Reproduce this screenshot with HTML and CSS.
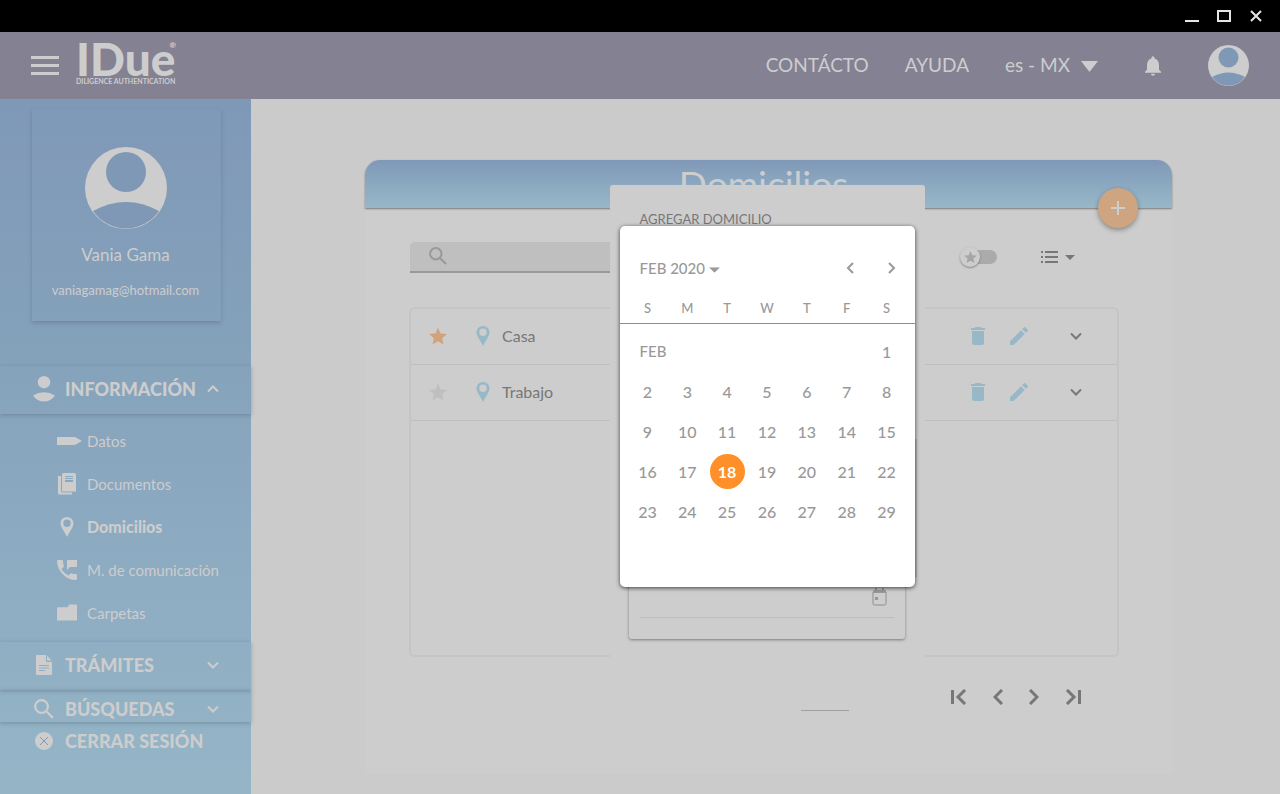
FILE: index.html
```
<!DOCTYPE html>
<html lang="es">

<head>
    <meta charset="UTF-8">
    <meta name="viewport" content="width=device-width, initial-scale=1.0">
    <title>IDue - Domicilios</title>
    <link rel="stylesheet" href="styles.css">
</head>

<body>
    <svg class="sprite" aria-hidden="true">
        <symbol id="avatar" viewBox="0 0 82 82">
            <circle cx="41" cy="41" r="41" fill="#cdcdcd" />
            <circle cx="41" cy="25" r="20" fill="#7f98b6" />
            <path d="M8 64Q41 46 74 64A40 40 0 0 1 8 64Z" fill="#7f98b6" />
        </symbol>
        <symbol id="pin" viewBox="0 0 14 20">
            <path fill-rule="evenodd" d="M7 0C3 0 .5 3 .5 6.500C.5 10 4 14 7 20C10 14 13.500 10 13.500 6.500C13.500 3 11 0 7 0ZM7 2.500A3.700 3.700 0 1 1 7 9.900A3.700 3.700 0 1 1 7 2.500Z" />
        </symbol>
        <symbol id="star" viewBox="2 2 20 19">
            <path d="M12 17.270L18.180 21l-1.640-7.030L22 9.240l-7.190-.61L12 2 9.190 8.630 2 9.240l5.460 4.730L5.820 21z" />
        </symbol>
        <symbol id="down" viewBox="0 0 12 8">
            <path d="M1 1.500L6 6.500L11 1.500" fill="none" stroke="currentColor" stroke-width="2" />
        </symbol>
        <symbol id="left" viewBox="0 0 10 16">
            <path d="M9 1L2 8L9 15" fill="none" stroke="currentColor" stroke-width="3" />
        </symbol>
        <symbol id="trash" viewBox="0 0 14 18">
            <path d="M1 4h12v12a2 2 0 0 1-2 2H3a2 2 0 0 1-2-2zM4.500 0h5l1 1H14v2H0V1h3.500z" />
        </symbol>
        <symbol id="pencil" viewBox="3 3 18 18">
            <path d="M3 17.250V21h3.750L17.810 9.940l-3.750-3.750L3 17.250zM20.710 7.040a1 1 0 0 0 0-1.410l-2.340-2.340a1 1 0 0 0-1.410 0l-1.830 1.830 3.750 3.750 1.830-1.830z" />
        </symbol>
        <symbol id="search" viewBox="0 0 18 18">
            <path d="M11.500 11.500L17 17M12.500 6.800A5.700 5.700 0 1 1 1.100 6.800A5.700 5.700 0 1 1 12.500 6.800Z" fill="none" stroke="currentColor" stroke-width="2" />
        </symbol>
        <symbol id="caret" viewBox="0 0 10 5">
            <path d="M0 0h10L5 5z" />
        </symbol>
    </svg>

    <div class="titlebar">
        <button aria-label="Minimizar"><svg width="14" height="12"><path d="M0 11H14" stroke="#e6e6e6" stroke-width="2" /></svg></button>
        <button aria-label="Maximizar"><svg width="14" height="12"><path d="M1 1H13V11H1Z" fill="none" stroke="#e6e6e6" stroke-width="2" /></svg></button>
        <button aria-label="Cerrar"><svg width="14" height="12"><path d="M2 1L12 11M12 1L2 11" stroke="#e6e6e6" stroke-width="2" /></svg></button>
    </div>

    <header class="header">
        <button class="menu" aria-label="Menú"><span></span><span></span><span></span></button>
        <a class="logo" href="#">
            <span class="logo-name">IDue<sup>®</sup></span>
            <span class="logo-sub">DILIGENCE AUTHENTICATION</span>
        </a>
        <nav class="nav">
            <a href="#">CONTÁCTO</a>
            <a href="#">AYUDA</a>
            <div class="lang">
                <select aria-label="Idioma">
                    <option>es - MX</option>
                </select>
                <svg width="17" height="11" viewBox="0 0 17 11"><path d="M0 0H17L8.500 11Z" /></svg>
            </div>
        </nav>
        <button class="bell" aria-label="Notificaciones">
            <svg width="16" height="20" viewBox="4 2.500 16 19.500"><path d="M12 22a2 2 0 0 0 2-2h-4c0 1.100.9 2 2 2zm6-6v-5c0-3.070-1.640-5.640-4.500-6.320V4a1.500 1.500 0 0 0-3 0v.68C7.630 5.360 6 7.920 6 11v5l-2 2v1h16v-1z" /></svg>
        </button>
        <button class="account" aria-label="Cuenta"><svg width="41" height="41"><use href="#avatar" /></svg></button>
    </header>

    <div class="page">
        <aside class="sidebar">
            <div class="profile">
                <svg width="82" height="82"><use href="#avatar" /></svg>
                <p class="profile-name">Vania Gama</p>
                <p class="profile-mail">vaniagamag@hotmail.com</p>
            </div>

            <button class="section">
                <svg class="section-icon" height="26" viewBox="0 0 22 26"><circle cx="11" cy="6.200" r="6.200" /><path d="M0 19.500Q11 13 22 19.500Q18 25.500 11 25.500Q4 25.500 0 19.500Z" /></svg>
                <span>INFORMACIÓN</span>
                <svg class="arrow up" width="12" height="8"><use href="#down" /></svg>
            </button>
            <nav class="submenu">
                <a href="#">
                    <svg width="25" height="8" viewBox="0 0 25 8"><path d="M0 0H18L25 4L18 8H0Z" /></svg>
                    Datos
                </a>
                <a href="#">
                    <svg width="20" height="22" viewBox="0 0 20 22"><path d="M1 3H4V18A1.500 1.500 0 0 0 5.500 19.500H15V21.500H2.500A1.500 1.500 0 0 1 1 20Z" /><path fill-rule="evenodd" d="M5 1.500A1.500 1.500 0 0 1 6.500 0H17.500A1.500 1.500 0 0 1 19 1.500V18.500H5ZM8 3V4H16V3ZM8 5V6H16V5ZM8 7V9H16V7Z" /></svg>
                    Documentos
                </a>
                <a class="active" href="#">
                    <svg width="20" height="20"><use href="#pin" /></svg>
                    Domicilios
                </a>
                <a href="#">
                    <svg width="20" height="20" viewBox="0 0 20 20"><path d="M1 0H5Q6 0 6 1Q6 4 7 6Q7 7 6 7.500L4.500 9.300Q7 13.500 11.500 15.500L13.500 13.500Q14 13 15 13.500Q17 14 19 14Q20 14 20 15V19Q20 20 19 20Q11 20 5.500 14Q0 8 0 1Q0 0 1 0ZM10 0H20V7H13L10 10Z" /></svg>
                    M. de comunicación
                </a>
                <a href="#">
                    <svg width="20" height="17" viewBox="0 0 21 17"><path d="M1 3H11L13 0H20Q21 0 21 1V16Q21 17 20 17H1Q0 17 0 16V4Q0 3 1 3Z" /></svg>
                    Carpetas
                </a>
            </nav>
            <button class="section">
                <svg class="section-icon" height="20" viewBox="0 0 16 20"><path fill-rule="evenodd" d="M1 0H10V7H16V19Q16 20 15 20H1Q0 20 0 19V1Q0 0 1 0ZM11 0.500L15.500 5.500H11ZM3 10V11H13V10ZM3 12.500V13.500H13V12.500ZM3 15V16H9V15Z" /></svg>
                <span>TRÁMITES</span>
                <svg class="arrow" width="12" height="8"><use href="#down" /></svg>
            </button>
            <button class="section compact">
                <svg class="section-icon" height="20"><use href="#search" /></svg>
                <span>BÚSQUEDAS</span>
                <svg class="arrow" width="12" height="8"><use href="#down" /></svg>
            </button>
            <button class="section logout">
                <svg class="section-icon" height="18" viewBox="0 0 18 18"><circle cx="9" cy="9" r="9" /><path d="M5 5L13 13M13 5L5 13" stroke="#7f98b6" stroke-width="1" /></svg>
                <span>CERRAR SESIÓN</span>
            </button>
        </aside>

        <main class="main">
            <section class="card">
                <div class="card-head">
                    <h1>Domicilios</h1>
                    <button class="add" aria-label="Agregar domicilio"><svg width="14" height="14"><path d="M7 0V14M0 7H14" stroke="#cdcdcd" stroke-width="2" /></svg></button>
                </div>

                <div class="card-body">
                    <div class="toolbar">
                        <label class="search">
                            <svg width="18" height="18"><use href="#search" /></svg>
                            <input type="search" aria-label="Buscar">
                        </label>
                        <label class="switch">
                            <input type="checkbox" aria-label="Solo favoritos">
                            <span class="track"></span>
                            <span class="thumb"><svg width="13" height="12"><use href="#star" /></svg></span>
                        </label>
                        <button class="view" aria-label="Vista">
                            <svg width="17" height="12" viewBox="0 0 17 12"><path d="M0 0H2V2H0ZM4 0H17V2H4ZM0 5H2V7H0ZM4 5H17V7H4ZM0 10H2V12H0ZM4 10H17V12H4Z" /></svg>
                            <svg width="10" height="5"><use href="#caret" /></svg>
                        </button>
                    </div>

                    <ul class="list">
                        <li class="row">
                            <button class="star on" aria-label="Favorito"><svg width="18" height="18"><use href="#star" /></svg></button>
                            <svg class="pin" width="14" height="20"><use href="#pin" /></svg>
                            <span class="row-name">Casa</span>
                            <button class="tool" aria-label="Eliminar"><svg width="14" height="18"><use href="#trash" /></svg></button>
                            <button class="tool" aria-label="Editar"><svg width="18" height="18"><use href="#pencil" /></svg></button>
                            <button class="open" aria-label="Ver detalle"><svg width="12" height="8"><use href="#down" /></svg></button>
                        </li>
                        <li class="row">
                            <button class="star" aria-label="Favorito"><svg width="18" height="18"><use href="#star" /></svg></button>
                            <svg class="pin" width="14" height="20"><use href="#pin" /></svg>
                            <span class="row-name">Trabajo</span>
                            <button class="tool" aria-label="Eliminar"><svg width="14" height="18"><use href="#trash" /></svg></button>
                            <button class="tool" aria-label="Editar"><svg width="18" height="18"><use href="#pencil" /></svg></button>
                            <button class="open" aria-label="Ver detalle"><svg width="12" height="8"><use href="#down" /></svg></button>
                        </li>
                    </ul>

                    <div class="pager">
                        <span class="page-size"></span>
                        <button aria-label="Primera página"><svg width="16" height="16" viewBox="0 0 16 16"><path d="M1.500 1V15M14 1L7 8L14 15" fill="none" stroke="currentColor" stroke-width="3" /></svg></button>
                        <button aria-label="Página anterior"><svg width="10" height="16"><use href="#left" /></svg></button>
                        <button aria-label="Página siguiente"><svg class="flip" width="10" height="16"><use href="#left" /></svg></button>
                        <button aria-label="Última página"><svg class="flip" width="16" height="16" viewBox="0 0 16 16"><path d="M1.500 1V15M14 1L7 8L14 15" fill="none" stroke="currentColor" stroke-width="3" /></svg></button>
                    </div>
                </div>

                <div class="dialog" role="dialog" aria-labelledby="dialog-title">
                    <h2 id="dialog-title">AGREGAR DOMICILIO</h2>
                    <div class="options"></div>
                    <div class="form">
                        <div class="field">
                            <input type="text" aria-label="Fecha">
                            <svg width="15" height="18" viewBox="0 0 15 18"><path d="M1 4H14V15.500Q14 17 12.500 17H2.500Q1 17 1 15.500Z" fill="none" stroke="#8e8e8e" stroke-width="1" /><path d="M1 3Q1 2 2.500 2H3V0H5V2H10V0H12V2H12.500Q14 2 14 3V5H1ZM3 9H6V12H3Z" fill="#999" /></svg>
                        </div>
                    </div>

                    <div class="calendar">
                        <div class="calendar-head">
                            <button class="month">FEB 2020 <svg width="11" height="6" viewBox="0 0 10 5"><use href="#caret" /></svg></button>
                            <button aria-label="Mes anterior"><svg width="8" height="12" viewBox="0 0 8 12"><path d="M7 1L2 6L7 11" fill="none" stroke="currentColor" stroke-width="2" /></svg></button>
                            <button aria-label="Mes siguiente"><svg width="8" height="12" viewBox="0 0 8 12"><path d="M1 1L6 6L1 11" fill="none" stroke="currentColor" stroke-width="2" /></svg></button>
                        </div>
                        <table>
                            <thead>
                                <tr><th>S</th><th>M</th><th>T</th><th>W</th><th>T</th><th>F</th><th>S</th></tr>
                            </thead>
                            <tbody>
                                <tr><td class="label" colspan="6">FEB</td><td><button>1</button></td></tr>
                                <tr><td><button>2</button></td><td><button>3</button></td><td><button>4</button></td><td><button>5</button></td><td><button>6</button></td><td><button>7</button></td><td><button>8</button></td></tr>
                                <tr><td><button>9</button></td><td><button>10</button></td><td><button>11</button></td><td><button>12</button></td><td><button>13</button></td><td><button>14</button></td><td><button>15</button></td></tr>
                                <tr><td><button>16</button></td><td><button>17</button></td><td><button class="selected">18</button></td><td><button>19</button></td><td><button>20</button></td><td><button>21</button></td><td><button>22</button></td></tr>
                                <tr><td><button>23</button></td><td><button>24</button></td><td><button>25</button></td><td><button>26</button></td><td><button>27</button></td><td><button>28</button></td><td><button>29</button></td></tr>
                            </tbody>
                        </table>
                    </div>
                </div>
            </section>
        </main>
    </div>
</body>

</html>
```
FILE: styles.css
```
* {
    box-sizing: border-box;
}

body {
    margin: 0;
    min-height: 100vh;
    display: flex;
    flex-direction: column;
    background-color: #cbcbcb;
    color: #777;
    font-family: Lato, "Liberation Sans", sans-serif;
    font-size: 16px;
}

button,
input,
select {
    font: inherit;
    color: inherit;
    background: none;
    border: none;
    padding: 0;
    margin: 0;
}

button {
    display: flex;
    align-items: center;
    justify-content: center;
    cursor: pointer;
}

a {
    color: inherit;
    text-decoration: none;
}

svg {
    display: block;
    fill: currentColor;
    flex-shrink: 0;
}

h1,
h2,
p,
ul {
    margin: 0;
    padding: 0;
}

.sprite {
    display: none;
}

/* window bar */
.titlebar {
    height: 32px;
    display: flex;
    align-items: center;
    justify-content: flex-end;
    gap: 18px;
    padding-right: 17px;
    background-color: #000;
}

/* header */
.header {
    height: 67px;
    display: flex;
    align-items: center;
    padding: 0 31px;
    background-color: #848193;
    color: #cdcdcd;
}

.menu {
    flex-direction: column;
    gap: 5px;
}

.menu span {
    width: 28px;
    height: 3px;
    background-color: #cdcdcd;
}

.logo {
    display: flex;
    flex-direction: column;
    margin-left: 17px;
    padding-bottom: 5px;
}

.logo-name {
    display: flex;
    font-size: 46px;
    font-weight: 900;
    line-height: 36px;
}

.logo-name sup {
    font-size: 8px;
    line-height: 8px;
    margin-left: -6px;
}

.logo-sub {
    font-size: 7px;
    font-weight: 700;
    line-height: 8px;
}

.nav {
    display: flex;
    align-items: center;
    gap: 36px;
    margin-left: auto;
    padding-bottom: 3px;
    font-size: 19px;
}

.lang {
    display: flex;
    align-items: center;
    gap: 10px;
}

.lang select {
    appearance: none;
}

.lang svg {
    margin-top: 4px;
}

.bell {
    margin: 0 47px;
}

/* sidebar */
.page {
    flex: 1;
    display: flex;
}

.sidebar {
    width: 251px;
    flex-shrink: 0;
    padding-top: 10px;
    background: linear-gradient(#7f98b8, #84a1ba 33%, #8ba9c0 60%, #95b5c7);
    color: #cdcdcd;
}

.profile {
    display: flex;
    flex-direction: column;
    align-items: center;
    margin: 0 30px 45px 32px;
    padding: 38px 2px 22px 0;
    box-shadow: 0 2px 4px rgba(80, 95, 115, 0.4);
}

.profile-name {
    margin-top: 16px;
    font-size: 17px;
    line-height: 20px;
}

.profile-mail {
    margin-top: 16px;
    font-size: 13px;
    line-height: 18px;
}

.section {
    width: 100%;
    height: 48px;
    justify-content: flex-start;
    padding: 0 32px 2px 33px;
    font-size: 18px;
    font-weight: 900;
    box-shadow: 0 1px 4px rgba(70, 85, 100, 0.4);
}

.section-icon {
    width: 22px;
    margin-right: 10px;
}

.arrow {
    margin-left: auto;
}

.up {
    transform: rotate(180deg);
}

.compact {
    height: 32px;
    padding-top: 8px;
}

.logout {
    height: 40px;
    box-shadow: none;
}

.submenu {
    padding: 5px 0 8px 57px;
    font-size: 15px;
}

.submenu a {
    height: 43px;
    display: flex;
    align-items: center;
}

.submenu svg {
    margin-right: 10px;
}

.submenu a:first-child svg {
    margin-right: 5px;
}

.submenu .active {
    font-size: 16px;
    font-weight: 900;
}

/* content */
.main {
    flex: 1;
    padding: 61px 108px 20px 114px;
}

.card {
    position: relative;
    height: 100%;
    background-color: #cdcdcd;
    border-radius: 15px 15px 0 0;
}

.card-head {
    position: relative;
    height: 48px;
    padding-right: 10px;
    border-radius: 15px 15px 0 0;
    background: linear-gradient(#7f98b8, #97b8c8);
    box-shadow: 0 1px 2px rgba(0, 0, 0, 0.4);
    text-align: center;
    color: #cdcdcd;
}

.card-head h1 {
    font-size: 37px;
    font-weight: 400;
    line-height: 48px;
}

.add {
    position: absolute;
    right: 34px;
    bottom: -20px;
    width: 40px;
    height: 40px;
    border-radius: 50%;
    background-color: #cea580;
    box-shadow: 0 2px 5px rgba(0, 0, 0, 0.35);
}

.card-body {
    padding: 33px 53px 0 44px;
}

.toolbar {
    display: flex;
    align-items: center;
    padding: 0 44px 0 1px;
    height: 32px;
}

.search {
    width: 60%;
    height: 31px;
    display: flex;
    align-items: center;
    padding-left: 19px;
    border-bottom: 2px solid #999;
    border-radius: 5px 5px 0 0;
    background-color: #bfbfbf;
    color: #999;
}

.search input {
    flex: 1;
    margin-left: 12px;
}

.switch {
    position: relative;
    width: 37px;
    height: 20px;
    display: flex;
    align-items: center;
    margin-left: auto;
}

.switch input {
    position: absolute;
    opacity: 0;
}

.track {
    width: 32px;
    height: 14px;
    margin-left: 5px;
    border-radius: 7px;
    background-color: #ababab;
}

.thumb {
    position: absolute;
    left: 0;
    width: 20px;
    height: 20px;
    display: flex;
    align-items: center;
    justify-content: center;
    border-radius: 50%;
    background-color: #cdcdcd;
    color: #a6a6a6;
    box-shadow: 0 1px 2px rgba(0, 0, 0, 0.35);
}

.view {
    gap: 7px;
    margin-left: 44px;
}

.list {
    min-height: 350px;
    margin-top: 34px;
    list-style: none;
    border: 2px solid #c5c5c5;
    border-radius: 6px;
}

.row {
    height: 56px;
    display: flex;
    align-items: center;
    padding: 0 35px 2px 18px;
    border-bottom: 1px solid #bfbfbf;
}

.star {
    color: #bfbfbf;
}

.star.on {
    color: #d1a27c;
}

.pin {
    margin-left: 29px;
    color: #97b9c7;
}

.row-name {
    flex: 1;
    margin-left: 12px;
}

.tool {
    margin-right: 25px;
    color: #97b9c7;
}

.open {
    margin-left: 17px;
}

.pager {
    display: flex;
    align-items: center;
    gap: 26px;
    height: 40px;
    margin-top: 20px;
    padding-right: 38px;
}

.page-size {
    width: 48px;
    height: 28px;
    margin-left: auto;
    margin-right: 76px;
    border-bottom: 1px solid #a0a0a0;
}

.flip {
    transform: scaleX(-1);
}

/* add address dialog */
.dialog {
    position: absolute;
    top: 25px;
    left: 50%;
    width: 315px;
    margin-left: -159px;
    padding: 25px 20px 68px 19px;
    border-radius: 3px;
    background-color: #cdcdcd;
}

.dialog h2 {
    padding-left: 11px;
    font-size: 13px;
    font-weight: 400;
    line-height: 18px;
}

.form {
    height: 395px;
    display: flex;
    flex-direction: column;
    justify-content: flex-end;
    margin-top: 16px;
    padding: 0 11px 21px;
    border-radius: 3px;
    box-shadow: 0 1px 3px rgba(0, 0, 0, 0.4);
}

.field {
    height: 30px;
    display: flex;
    align-items: flex-start;
    padding-right: 7px;
    border-bottom: 1px solid #bdbdbd;
}

.field input {
    flex: 1;
    min-width: 0;
}

.options {
    position: absolute;
    top: 254px;
    right: 8px;
    width: 250px;
    height: 138px;
    background-color: #b4b4b4;
}

/* date picker */
.calendar {
    position: absolute;
    top: 41px;
    left: 10px;
    right: 10px;
    height: 361px;
    border-radius: 5px;
    background-color: #fff;
    color: #999;
    box-shadow: 0 1px 4px rgba(0, 0, 0, 0.7);
}

.calendar-head {
    display: flex;
    align-items: center;
    gap: 34px;
    padding: 32px 19px 0 20px;
}

.month {
    gap: 4px;
    margin-right: auto;
    font-size: 15px;
    font-weight: 500;
    line-height: 20px;
}

.month svg {
    margin-top: 3px;
}

.calendar table,
.calendar thead,
.calendar tbody {
    display: block;
}

.calendar tr {
    display: grid;
    grid-template-columns: repeat(7, 1fr);
    padding: 0 8px;
}

.calendar thead tr {
    margin-top: 20px;
    padding-bottom: 5px;
    border-bottom: 1px solid #8e8e8e;
}

.calendar th {
    padding: 0;
    font-size: 13px;
    font-weight: 500;
    line-height: 20px;
}

.calendar tbody {
    padding-top: 7px;
}

.calendar td {
    height: 40px;
    display: flex;
    align-items: center;
    justify-content: center;
    padding: 0;
}

.calendar td button {
    width: 35px;
    height: 35px;
    border-radius: 50%;
    font-weight: 500;
}

.calendar .label {
    grid-column: span 6;
    justify-content: flex-start;
    padding-left: 12px;
    font-size: 15px;
    font-weight: 500;
}

.calendar .selected {
    background-color: #ff8f28;
    color: #fff;
    font-weight: 700;
}
```
